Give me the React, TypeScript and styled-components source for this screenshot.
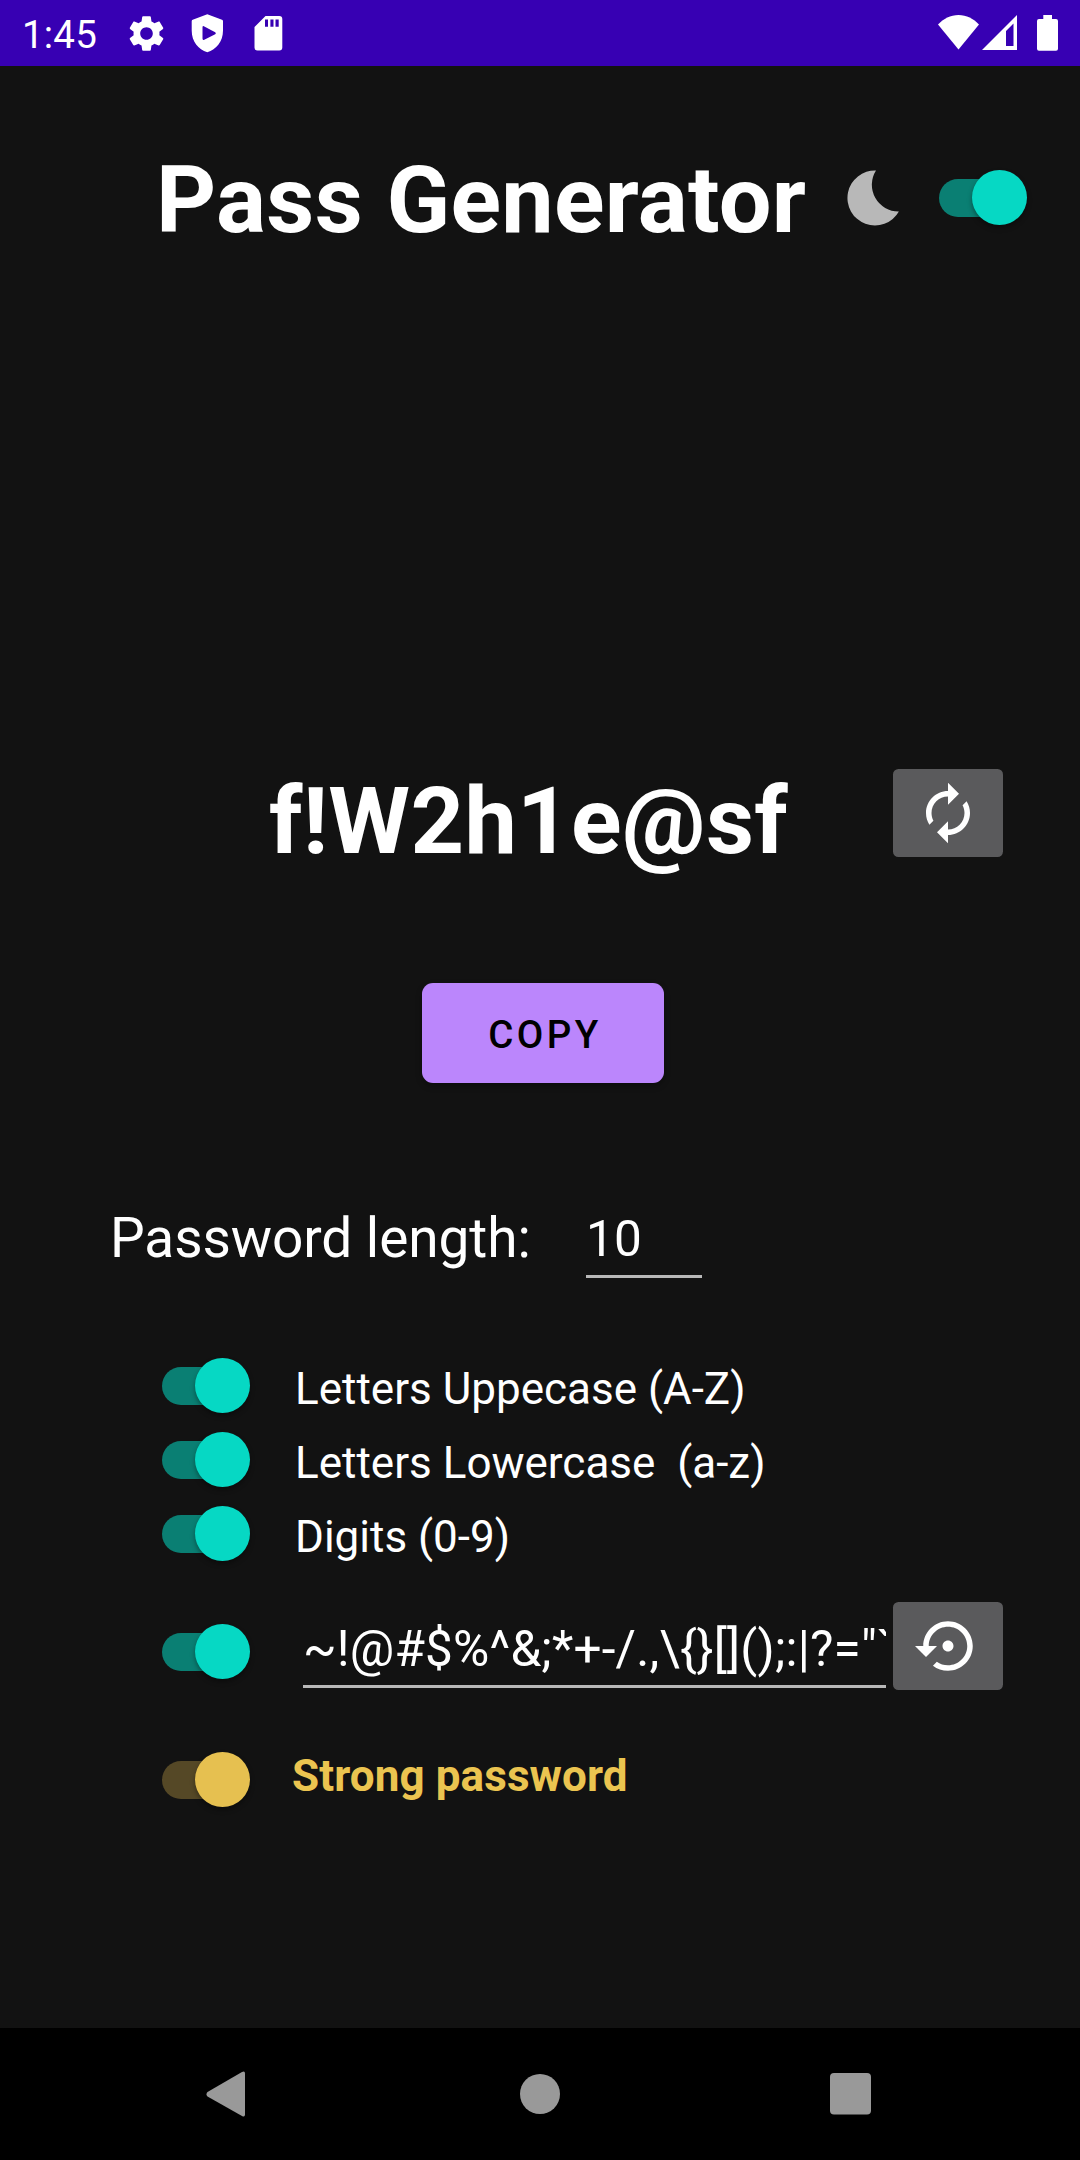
import React, { useState } from "react";
import styled, { createGlobalStyle } from "styled-components";

const GlobalStyle = createGlobalStyle`
  * { box-sizing: border-box; }
  body { margin: 0; background: #121212; }
`;

const Screen = styled.div`
  display: flex;
  flex-direction: column;
  width: 1080px;
  height: 2160px;
  overflow: hidden;
  background: #121212;
  color: #fff;
  font-family: Roboto, "Liberation Sans", sans-serif;
  svg { display: block; }
`;

const StatusBar = styled.header`
  display: flex;
  align-items: center;
  justify-content: space-between;
  height: 66px;
  padding: 0 20px 0 22px;
  background: #3700b3;
`;

const StatusGroup = styled.div`
  display: flex;
  align-items: center;
`;

const Clock = styled.span`
  width: 103px;
  font-size: 38.5px;
  line-height: 46px;
  padding-top: 4px;
  letter-spacing: 0.2px;
`;

const Main = styled.main`
  display: flex;
  flex-direction: column;
  flex: 1;
`;

const TitleRow = styled.div`
  display: grid;
  grid-template-columns: 691px 92px 88px;
  align-items: center;
  height: 128px;
  margin: 68px 0 0 156px;
`;

const Title = styled.h1`
  margin: 4px 0 0;
  font-size: 93.5px;
  line-height: 110px;
  font-weight: 700;
  letter-spacing: 0.28px;
  white-space: nowrap;
`;

const ResultRow = styled.section`
  display: flex;
  justify-content: space-between;
  align-items: flex-start;
  height: 110px;
  margin-top: 504px;
  padding: 0 77px 0 269px;
`;

const Password = styled.output`
  font-size: 93.5px;
  line-height: 110px;
  font-weight: 700;
  letter-spacing: 0.3px;
  white-space: nowrap;
`;

const IconButton = styled.button<{ $drop?: number }>`
  display: flex;
  align-items: center;
  justify-content: center;
  flex: none;
  width: 110px;
  height: 88px;
  margin: ${(p) => p.$drop ?? 0}px 0 0;
  padding: 0;
  border: 0;
  border-radius: 5.5px;
  background: #5a5a5c;
  color: #fff;
`;

const CopyButton = styled.button`
  align-self: flex-start;
  width: 242px;
  height: 100px;
  margin: 107px 0 0 422px;
  padding: 2px 0 0 4px;
  border: 0;
  border-radius: 11px;
  background: #bb86fc;
  color: #000;
  box-shadow: 0 3px 6px rgba(0, 0, 0, 0.3);
  font-family: inherit;
  font-size: 38.5px;
  font-weight: 500;
  letter-spacing: 3.44px;
`;

const LengthRow = styled.section`
  display: flex;
  align-items: flex-start;
  height: 72px;
  margin-top: 123px;
  padding-left: 110px;
`;

const LengthLabel = styled.label`
  width: 476px;
  font-size: 55px;
  line-height: 64px;
  letter-spacing: -0.08px;
`;

const Field = styled.div<{ $width: number }>`
  width: ${(p) => p.$width}px;
  height: 72px;
  padding-bottom: 3px;
  border-bottom: 3px solid #b8b8b8;
  overflow: hidden;
  white-space: nowrap;
  font-size: 49.5px;
  line-height: 66px;
  letter-spacing: 0.18px;
`;

const Options = styled.section`
  display: flex;
  flex-direction: column;
  margin-top: 71px;
`;

const OptionRow = styled.div<{ $gap?: number }>`
  display: flex;
  align-items: center;
  height: 74px;
  margin-top: ${(p) => p.$gap ?? 0}px;
  padding-left: 162px;
`;

const OptionLabel = styled.span`
  margin: 6px 0 0 45px;
  font-size: 44px;
  line-height: 52px;
  white-space: pre;
`;

const StrongLabel = styled(OptionLabel)`
  margin: -8px 0 0 42px;
  font-weight: 700;
  letter-spacing: 0.1px;
  color: #ebc450;
`;

const SymbolsRow = styled.div`
  display: flex;
  align-items: flex-start;
  height: 88px;
  margin-top: 31px;
  padding: 0 77px 0 162px;
`;

const SymbolsSwitch = styled.div`
  width: 141px;
  padding-top: 22px;
`;

const SymbolsField = styled.div`
  flex: 1;
  padding-top: 14px;
`;

const Track = styled.button<{ $track: string; $on: boolean }>`
  display: flex;
  align-items: center;
  justify-content: ${(p) => (p.$on ? "flex-end" : "flex-start")};
  flex: none;
  width: 88px;
  height: 56px;
  padding: 0 0.5px 1px 0;
  border: 0;
  background: none;
  isolation: isolate;
  position: relative;
  &::before {
    content: "";
    position: absolute;
    z-index: -1;
    left: 0;
    top: 9px;
    width: 77px;
    height: 38px;
    border-radius: 19px;
    background: ${(p) => p.$track};
  }
`;

const Thumb = styled.span<{ $color: string }>`
  width: 55px;
  height: 55px;
  border-radius: 50%;
  background: ${(p) => p.$color};
  box-shadow: 0 3px 5px rgba(0, 0, 0, 0.35);
`;

const NavBar = styled.nav`
  display: grid;
  grid-template-columns: 314px 310px 41px;
  align-items: center;
  height: 132px;
  padding-left: 206px;
  background: #000;
`;

function Switch({ tone = "teal" }: { tone?: "teal" | "gold" }) {
  const [on, setOn] = useState(true);
  const gold = tone === "gold";
  return (
    <Track
      role="switch"
      aria-checked={on}
      $on={on}
      $track={gold ? "#554826" : "#0a7f73"}
      onClick={() => setOn(!on)}
    >
      <Thumb $color={gold ? "#e6c050" : "#06d8c4"} />
    </Track>
  );
}

const SYMBOLS = "~!@#$%^&;*+-/.,\\{}[]();:|?=\"`";

export default function App() {
  return (
    <Screen>
      <GlobalStyle />
      <StatusBar>
        <StatusGroup>
          <Clock>1:45</Clock>
          <svg width="160" height="66" viewBox="125 0 160 66" fill="#fff">
            <path
              transform="translate(124.9 11.9) scale(1.8)"
              d="M19.14 12.94c.04-.3.06-.61.06-.94 0-.32-.02-.64-.07-.94l2.03-1.58c.18-.14.23-.41.12-.61l-1.92-3.32c-.12-.22-.37-.29-.59-.22l-2.39.96c-.5-.38-1.03-.7-1.62-.94l-.36-2.54c-.04-.24-.24-.41-.48-.41h-3.84c-.24 0-.43.17-.47.41l-.36 2.54c-.59.24-1.13.57-1.62.94l-2.39-.96c-.22-.08-.47 0-.59.22L2.74 8.87c-.12.21-.08.47.12.61l2.03 1.58c-.05.3-.09.63-.09.94s.02.64.07.94l-2.03 1.58c-.18.14-.23.41-.12.61l1.92 3.32c.12.22.37.29.59.22l2.39-.96c.5.38 1.03.7 1.62.94l.36 2.54c.05.24.24.41.48.41h3.84c.24 0 .44-.17.47-.41l.36-2.54c.59-.24 1.13-.56 1.62-.94l2.39.96c.22.08.47 0 .59-.22l1.92-3.32c.12-.22.07-.47-.12-.61l-2.01-1.58zM12 15.5c-1.93 0-3.5-1.57-3.5-3.5s1.57-3.5 3.5-3.5 3.5 1.57 3.5 3.5-1.57 3.5-3.5 3.5z"
            />
            <path
              fillRule="evenodd"
              d="M207.3 14.3L222 19.8Q223 20.2 223 21.2V30.5C223 41.5 216.3 49.5 207.3 52.2C198.3 49.5 191.7 41.5 191.7 30.5V21.2Q191.7 20.2 192.7 19.8ZM202.5 27.5V38.6Q202.5 40.7 204.3 39.7L215.2 34.2Q216.6 33.2 215.2 32.3L204.3 26.4Q202.5 25.5 202.5 27.5Z"
            />
            <path
              fillRule="evenodd"
              d="M265.5 16H279.3Q282.3 16 282.3 19V47.5Q282.3 50.5 279.3 50.5H257.5Q254.5 50.5 254.5 47.5V27ZM265 19.5V26.7H268V19.5ZM270.4 19.5V26.7H273.5V19.5ZM275.5 19.5V26.7H278.7V19.5Z"
            />
          </svg>
        </StatusGroup>
        <svg width="124" height="66" viewBox="936 0 124 66" fill="#fff">
          <path d="M958.5 49.6L938 24.6C943.5 18.5 950.5 15 958.5 15S973.5 18.5 979 24.6Z" />
          <path fillRule="evenodd" d="M982 50L1017 15V50ZM1006 31V46H1013.5V23.5Z" />
          <path d="M1043.3 15H1052V19H1056Q1058 19 1058 21V48.7Q1058 50.7 1056 50.7H1039Q1037 50.7 1037 48.7V21Q1037 19 1039 19H1043.3Z" />
        </svg>
      </StatusBar>

      <Main>
        <TitleRow>
          <Title>Pass Generator</Title>
          <svg width="56" height="56" viewBox="-0.5 -0.5 56 56" fill="#b8b8b8">
            <path d="M28.5 0A27.5 27.5 0 1 0 51.4 41A26.7 26.7 0 0 1 28.5 0Z" />
          </svg>
          <Switch />
        </TitleRow>

        <ResultRow>
          <Password>f!W2h1e@sf</Password>
          <IconButton $drop={3} aria-label="Generate">
            <svg width="66" height="66" viewBox="0 0 24 24" fill="currentColor">
              <path d="M12 6v3l4-4-4-4v3c-4.42 0-8 3.58-8 8 0 1.57.46 3.03 1.24 4.26L6.7 14.8c-.45-.83-.7-1.79-.7-2.8 0-3.31 2.69-6 6-6zm6.76 1.74L17.3 9.2c.44.84.7 1.79.7 2.8 0 3.31-2.69 6-6 6v-3l-4 4 4 4v-3c4.42 0 8-3.58 8-8 0-1.57-.46-3.03-1.24-4.26z" />
            </svg>
          </IconButton>
        </ResultRow>

        <CopyButton>COPY</CopyButton>

        <LengthRow>
          <LengthLabel>Password length:</LengthLabel>
          <Field $width={116}>10</Field>
        </LengthRow>

        <Options>
          <OptionRow>
            <Switch />
            <OptionLabel>Letters Uppecase (A-Z)</OptionLabel>
          </OptionRow>
          <OptionRow>
            <Switch />
            <OptionLabel>{"Letters Lowercase  (a-z)"}</OptionLabel>
          </OptionRow>
          <OptionRow>
            <Switch />
            <OptionLabel>Digits (0-9)</OptionLabel>
          </OptionRow>
          <SymbolsRow>
            <SymbolsSwitch>
              <Switch />
            </SymbolsSwitch>
            <SymbolsField>
              <Field $width={583}>{SYMBOLS}</Field>
            </SymbolsField>
            <IconButton aria-label="Restore symbols">
              <svg width="66" height="66" viewBox="0 0 24 24" fill="currentColor">
                <path d="M14 12c0-1.1-.9-2-2-2s-2 .9-2 2 .9 2 2 2 2-.9 2-2zm-2-9c-4.97 0-9 4.03-9 9H0l4 4 4-4H5c0-3.87 3.13-7 7-7s7 3.13 7 7-3.13 7-7 7c-1.51 0-2.91-.49-4.06-1.3l-1.42 1.44C8.04 20.3 9.94 21 12 21c4.97 0 9-4.03 9-9s-4.03-9-9-9z" />
              </svg>
            </IconButton>
          </SymbolsRow>
          <OptionRow $gap={53}>
            <Switch tone="gold" />
            <StrongLabel>Strong password</StrongLabel>
          </OptionRow>
        </Options>
      </Main>

      <NavBar>
        <svg width="40" height="46" viewBox="0 0 40 46" fill="#999">
          <path d="M1.5 21L36 1Q39 -.5 39 2.5V43.5Q39 46.5 36 45L1.5 25.5Q-.5 23.2 1.5 21Z" />
        </svg>
        <svg width="40" height="40" viewBox="0 0 40 40" fill="#999">
          <circle cx="20" cy="20" r="20" />
        </svg>
        <svg width="41" height="42" viewBox="0 0 41 42" fill="#999">
          <rect width="41" height="41.5" rx="4" />
        </svg>
      </NavBar>
    </Screen>
  );
}
